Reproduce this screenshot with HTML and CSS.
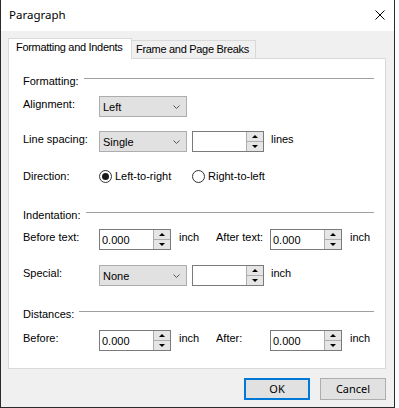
FILE: index.html
```html
<!DOCTYPE html>
<html>
<head>
<meta charset="utf-8">
<link rel="stylesheet" href="styles.css">
</head>
<body>
<div class="window">
  <div class="titlebar">
    <span class="title">Paragraph</span>
    <svg class="close" width="10" height="10" viewBox="0 0 10 10"><path d="M0.5 0.5 L9.5 9.5 M9.5 0.5 L0.5 9.5" stroke="#000" stroke-width="1" fill="none"/></svg>
  </div>
  <div class="body">
    <div class="tabs">
      <div class="tab active">Formatting and Indents</div>
      <div class="tab">Frame and Page Breaks</div>
    </div>
    <div class="panel">
      <div class="group-head g1"><span class="gtext">Formatting:</span><i class="rule"></i></div>

      <div class="row r-align">
        <span class="lbl">Alignment:</span>
        <div class="combo"><span class="ctext">Left</span><svg class="chev" width="7" height="4" viewBox="0 0 7 4"><path d="M0.5 0.5 L3.5 3.5 L6.5 0.5" stroke="#555" fill="none"/></svg></div>
      </div>

      <div class="row r-spacing">
        <span class="lbl">Line spacing:</span>
        <div class="combo"><span class="ctext">Single</span><svg class="chev" width="7" height="4" viewBox="0 0 7 4"><path d="M0.5 0.5 L3.5 3.5 L6.5 0.5" stroke="#555" fill="none"/></svg></div>
        <div class="spin spin-side"><span class="val"></span><span class="btns"><span class="up"></span><span class="down"></span></span></div>
        <span class="unit unit-side">lines</span>
      </div>

      <div class="row r-dir">
        <span class="lbl lbl-plain">Direction:</span>
        <span class="radio checked"></span><span class="rtext">Left-to-right</span>
        <span class="radio r2"></span><span class="rtext">Right-to-left</span>
      </div>

      <div class="group-head g2"><span class="gtext">Indentation:</span><i class="rule"></i></div>

      <div class="row r-before">
        <span class="lbl">Before text:</span>
        <div class="spin"><span class="val">0.000</span><span class="btns"><span class="up"></span><span class="down"></span></span></div>
        <span class="unit">inch</span>
        <span class="lbl2">After text:</span>
        <div class="spin"><span class="val">0.000</span><span class="btns"><span class="up"></span><span class="down"></span></span></div>
        <span class="unit">inch</span>
      </div>

      <div class="row r-special">
        <span class="lbl">Special:</span>
        <div class="combo"><span class="ctext">None</span><svg class="chev" width="7" height="4" viewBox="0 0 7 4"><path d="M0.5 0.5 L3.5 3.5 L6.5 0.5" stroke="#555" fill="none"/></svg></div>
        <div class="spin spin-side"><span class="val"></span><span class="btns"><span class="up"></span><span class="down"></span></span></div>
        <span class="unit unit-side">inch</span>
      </div>

      <div class="group-head g3"><span class="gtext">Distances:</span><i class="rule"></i></div>

      <div class="row r-dist">
        <span class="lbl">Before:</span>
        <div class="spin"><span class="val">0.000</span><span class="btns"><span class="up"></span><span class="down"></span></span></div>
        <span class="unit">inch</span>
        <span class="lbl2">After:</span>
        <div class="spin"><span class="val">0.000</span><span class="btns"><span class="up"></span><span class="down"></span></span></div>
        <span class="unit">inch</span>
      </div>
    </div>
    <div class="buttons">
      <button class="btn default">OK</button>
      <button class="btn">Cancel</button>
    </div>
  </div>
</div>
</body>
</html>
```
FILE: styles.css
```css
html, body {
  margin: 0;
  padding: 0;
  background: #ffffff;
}
.window {
  width: 395px;
  height: 408px;
  box-sizing: border-box;
  border: 1px solid #2b2b2b;
  border-top: none;
  display: flex;
  flex-direction: column;
  font-family: "Liberation Sans", Arial, sans-serif;
  font-size: 11px;
  color: #000;
}
.titlebar {
  height: 31px;
  flex: none;
  background: #fff;
  display: flex;
  align-items: flex-start;
  justify-content: space-between;
}
.title {
  font-family: "Noto Sans", sans-serif;
  font-size: 11.5px;
  line-height: 16px;
  margin-top: 7px;
  margin-left: 8px;
}
.close {
  margin-top: 10px;
  margin-right: 9px;
}
.body {
  flex: 1;
  background: #f0f0f0;
  padding: 7px 0 0 7px;
}
.tabs {
  display: flex;
  align-items: flex-end;
  height: 20px;
}
.tab {
  font-family: "Liberation Sans", Arial, sans-serif;
  font-size: 11px;
  letter-spacing: -0.3px;
  width: 125px;
  box-sizing: border-box;
  height: 18px;
  padding: 0 0 0 4px;
  border: 1px solid #d9d9d9;
  border-bottom: none;
  background: #f0f0f0;
  margin-left: -1px;
  white-space: nowrap;
  line-height: 16px;
}
.tab.active {
  position: relative;
  z-index: 2;
  width: 124px;
  height: 21px;
  margin-bottom: -1px;
  margin-left: 0;
  background: #fff;
  padding: 0 0 0 7px;
  line-height: 17px;
}
.panel {
  width: 378px;
  height: 311px;
  box-sizing: border-box;
  border: 1px solid #d9d9d9;
  background: #fff;
  padding: 0 11px 0 14px;
  display: flex;
  flex-direction: column;
}
.group-head {
  display: flex;
  align-items: flex-start;
  height: 13px;
  line-height: 13px;
}
.group-head .rule {
  flex: 1;
  height: 1px;
  background: #a0a0a0;
  margin-top: 3px;
  margin-left: 5px;
}
.g1 { margin-top: 16px; }
.g2 { margin-top: 26px; }
.g3 { margin-top: 22px; }
.row {
  display: flex;
  align-items: flex-start;
  height: 21px;
  line-height: 13px;
}
.r-align { margin-top: 8px; }
.r-spacing { margin-top: 14px; }
.r-dir { margin-top: 18px; height: 13px; }
.r-before { margin-top: 7px; }
.r-special { margin-top: 15px; }
.r-dist { margin-top: 9px; }
.lbl {
  width: 76px;
  flex: none;
  padding-top: 2px;
}
.lbl-plain { padding-top: 0; }
.lbl2 {
  width: 54px;
  flex: none;
  padding-top: 2px;
}
.unit {
  width: 45px;
  padding-left: 8px;
  box-sizing: border-box;
  padding-top: 2px;
  flex: none;
}
.unit-side { padding-left: 7px; }
.combo {
  width: 88px;
  height: 21px;
  box-sizing: border-box;
  border: 1px solid #adadad;
  background: #e1e1e1;
  display: flex;
  align-items: center;
  justify-content: space-between;
  padding: 0 6px 0 3px;
  flex: none;
}
.ctext { line-height: 13px; padding-top: 1px; }
.chev { margin-top: 1px; }
.spin {
  width: 72px;
  height: 21px;
  box-sizing: border-box;
  border: 1px solid #7a7a7a;
  background: #fff;
  display: flex;
  flex: none;
}
.spin-side { margin-left: 5px; }
.spin .val {
  flex: 1;
  padding-left: 2px;
  line-height: 19px;
  padding-top: 1px;
  box-sizing: border-box;
}
.spin .btns {
  width: 16px;
  display: flex;
  flex-direction: column;
  border-left: 1px solid #adadad;
  background: #e5e5e5;
}
.spin .up, .spin .down {
  flex: 1;
  display: flex;
  align-items: center;
  justify-content: center;
}
.spin .down { border-top: 1px solid #adadad; }
.spin .up::before {
  content: "";
  border-left: 3px solid transparent;
  border-right: 3px solid transparent;
  border-bottom: 3px solid #000;
}
.spin .down::before {
  content: "";
  border-left: 3px solid transparent;
  border-right: 3px solid transparent;
  border-top: 3px solid #000;
}
.radio {
  width: 13px;
  height: 13px;
  box-sizing: border-box;
  border: 1px solid #333;
  border-radius: 50%;
  background: #fff;
  flex: none;
  display: flex;
  align-items: center;
  justify-content: center;
}
.radio.checked::before {
  content: "";
  width: 7px;
  height: 7px;
  border-radius: 50%;
  background: #1a1a1a;
}
.rtext { padding-left: 3px; width: 77px; }
.r2 { margin-left: 0; }
.buttons {
  display: flex;
  justify-content: flex-end;
  gap: 10px;
  width: 378px;
  margin-top: 9px;
}
.btn {
  width: 66px;
  height: 22px;
  box-sizing: border-box;
  border: 1px solid #adadad;
  background: #e1e1e1;
  font-family: "Noto Sans", sans-serif;
  font-size: 11px;
  color: #000;
  padding: 0;
  margin: 0;
  line-height: 18px;
}
.btn.default {
  border: 2px solid #0078d7;
}
```
